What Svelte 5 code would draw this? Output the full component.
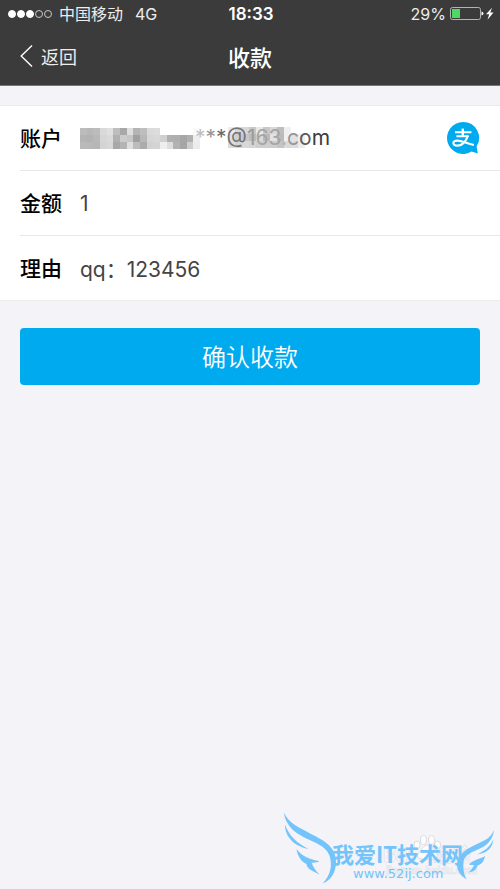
<script>
  let amount = $state('1');
  let reason = $state('qq：123456');

  const signal = [true, true, true, false, false];

  // grey levels of the mosaic that hides the start of the account, row by row
  const mosaic = [
    [188, 184, 188, 218, 224, 190, 168, 222, 180, 190, 218, 220, 255, 255, 255, 255, 255, 250],
    [180, 178, 184, 214, 218, 176, 204, 198, 160, 184, 214, 216, 208, 176, 174, 166, 176, 238],
    [186, 184, 182, 212, 216, 168, 180, 222, 188, 172, 210, 212, 238, 222, 178, 166, 206, 236]
  ];

  // second mosaic, over the domain
  const veil = [
    [236, 214, 216, 200, 232, 200, 216, 190, 240, 255, 255],
    [226, 208, 200, 188, 218, 186, 226, 186, 240, 226, 238],
    [220, 212, 216, 212, 206, 206, 206, 196, 218, 220, 236]
  ];

  const tail = [
    ['*', 190], ['*', 150], ['*', 105], ['@', 115], ['1', 155], ['6', 165],
    ['3', 165], ['.', 180], ['c', 150], ['o', 90], ['m', 60]
  ];

  const grey = (v) => `rgb(${v}, ${v}, ${v})`;
</script>

<div class="page">
  <header>
    <div class="status">
      <div class="carrier">
        <span class="signal">
          {#each signal as on}
            <i class:on></i>
          {/each}
        </span>
        <span>中国移动</span>
        <span class="network">4G</span>
      </div>
      <time>18:33</time>
      <div class="power">
        <span>29%</span>
        <svg width="44" height="14" viewBox="0 0 44 14" aria-hidden="true">
          <rect x="0.5" y="0.5" width="30" height="12" rx="2" fill="none" stroke="#b4b4b4" />
          <rect x="2" y="2" width="8" height="9" fill="#4cd964" />
          <path d="M31.5 4.5q2 .4 2 2t-2 2z" fill="#fff" />
          <path d="M42 .8 36 7.3h3.200L37.500 12.800 43.500 5.600h-3.200z" fill="#fff" />
        </svg>
      </div>
    </div>
    <nav>
      <a href="#back">
        <svg width="13" height="24" viewBox="0 0 13 24" aria-hidden="true">
          <path d="M12 1.5 1.2 12 12 22.5" fill="none" stroke="#fff" stroke-width="1.4" />
        </svg>
        返回
      </a>
      <h1>收款</h1>
    </nav>
  </header>

  <form onsubmit={(e) => e.preventDefault()}>
    <div class="fields">
      <div class="row">
        <span class="label">账户</span>
        <div class="account">
          <svg class="mosaic" width="120" height="21" viewBox="0 0 18 3" preserveAspectRatio="none" shape-rendering="crispEdges" aria-hidden="true">
            {#each mosaic as line, y}
              {#each line as v, x}
                <rect {x} {y} width="1" height="1" fill={grey(v)} />
              {/each}
            {/each}
          </svg>
          <span class="tail">
            <svg class="veil" width="77" height="21" viewBox="0 0 11 3" preserveAspectRatio="none" shape-rendering="crispEdges" aria-hidden="true">
              {#each veil as line, y}
                {#each line as v, x}
                  <rect {x} {y} width="1" height="1" fill={grey(v)} />
                {/each}
              {/each}
            </svg>
            <span class="chars">{#each tail as [ch, v]}<span style:color={grey(v)}>{ch}</span>{/each}</span>
          </span>
        </div>
        <svg class="alipay" width="33" height="33" viewBox="0 0 33 33" role="img" aria-label="支付宝">
          <path d="M16 0a16 16 0 1 0 8.6 29.5l6.2 2-1.2-6.9A16 16 0 0 0 16 0z" fill="#00aaef" />
          <g fill="none" stroke="#fff">
            <path d="M8 10.3h16.4M9.4 14.3h12.2" stroke-width="1.9" />
            <path d="M15.8 6.6v7.6" stroke-width="2.4" />
            <path d="M20.9 13.8c-1.4 4.6-5.2 9.8-10.6 9.8-5.4 0-5.2-5 .2-5 4.8 0 9.4 3.2 16.4 4.4" stroke-width="2.1" />
          </g>
        </svg>
      </div>
      <div class="row">
        <label for="amount">金额</label>
        <input id="amount" type="text" bind:value={amount} />
      </div>
      <div class="row">
        <label for="reason">理由</label>
        <input id="reason" type="text" bind:value={reason} />
      </div>
    </div>
    <button type="submit">确认收款</button>
  </form>

  <svg class="watermark" width="220" height="80" viewBox="0 0 220 80">
    <g class="baidu">
      <text x="103" y="53" font-size="20">Bai</text>
      <text x="153" y="53" font-size="19">经验</text>
      <text x="106" y="65" font-size="10">jingyan.baidu.com</text>
      <g class="paw">
        <ellipse cx="137" cy="36" rx="3" ry="4" />
        <ellipse cx="143.5" cy="31" rx="3" ry="4.5" />
        <ellipse cx="151.5" cy="31" rx="3" ry="4.5" />
        <ellipse cx="157.5" cy="36" rx="3" ry="4" />
        <path d="M147.5 36c4 0 5 4 8 7s2 7-2 7h-12c-4 0-5-4-2-7s4-7 8-7z" />
      </g>
    </g>
    <g class="wings">
      <path d="M4 3.7C9 15 19 18 31 25 45 32 56 38 56 53c0 11-6 19-13.3 21.3C50 67 53 57 49.5 46.5 45 35 31 33 20 26 11 21 5 13 4 3.7z" />
      <path d="M5 15.5C9 27 17 34 28.5 40 17 38 5 30 5 15.5z" />
      <path d="M16.5 40c6 8 13 10 23 12.3-3 1.4-6 1.6-8 1.2 2 5 4 8 8 12C31 61 27 60 26.500 55c-5-2-9-8-10-15z" />
      <path d="M214 21c-1 8-5 14-13 18-9 4-17 7-17.5 14-.5 6 0 12 3.2 17.3-6-3-9.7-8.800-9.7-14.800 0-8 7-14 14-17.5C202 32 210 31 214 21z" />
      <path d="M213.5 30c-1 9-6 14-16.5 15.5 7-3.500 13-7 16.5-15.5z" />
      <path d="M205 47c-4 3-11 3-16 8.5 2 .8 3 .6 5 .6-1 3-3 5-5.5 7.4 7-1 8-4 9-7 4-1 6.5-4 7.5-9.5z" />
      <text class="name" x="52" y="54">我爱IT技术网</text>
      <text class="site" x="73" y="69">www.52ij.com</text>
    </g>
  </svg>
</div>

<style>
  :global(body) {
    margin: 0;
    background: #f3f3f8;
  }

  .page {
    position: relative;
    min-height: 100vh;
    background: #f3f3f8;
    color: #3c3c3c;
    font-family: Inter, "Noto Sans CJK SC", sans-serif;
  }

  header {
    background: #3b3b3b;
    border-bottom: 1px solid #77757a;
    color: #fff;
  }

  .status {
    display: grid;
    grid-template-columns: 1fr auto 1fr;
    align-items: center;
    height: 28px;
    padding: 0 6px 0 8px;
    font-size: 16px;
    line-height: 28px;
  }

  .carrier,
  .power {
    display: flex;
    align-items: center;
    color: #ededed;
  }

  .power {
    justify-content: flex-end;
    gap: 4px;
  }

  .signal {
    display: flex;
    gap: 1px;
    margin-right: 7px;
  }

  .signal i {
    box-sizing: border-box;
    width: 8px;
    height: 8px;
    border: 1px solid #c8c8c8;
    border-radius: 50%;
  }

  .signal i.on {
    background: #fff;
    border-color: #fff;
  }

  .network {
    margin-left: 12px;
  }

  time {
    font-size: 17px;
    font-weight: 600;
  }

  nav {
    display: grid;
    grid-template-columns: 1fr auto 1fr;
    align-items: center;
    height: 55px;
    padding: 0 20px 2px;
  }

  nav a {
    display: flex;
    align-items: center;
    gap: 8px;
    color: #ededed;
    font-size: 18px;
    text-decoration: none;
  }

  h1 {
    margin: 0;
    font-size: 22px;
    font-weight: 500;
  }

  .fields {
    margin-top: 19px;
    padding-left: 20px;
    background: #fff;
    border-top: 1px solid #e9e9ec;
    border-bottom: 1px solid #ececec;
  }

  .row {
    display: flex;
    align-items: center;
    height: 64px;
    padding-right: 20px;
    font-size: 21px;
  }

  .row + .row {
    border-top: 1px solid #e8e8e8;
  }

  .label,
  label {
    flex: none;
    width: 60px;
    padding-bottom: 2px;
    color: #000;
    font-weight: 500;
  }

  .row input {
    flex: 1;
    min-width: 0;
    padding: 0;
    border: 0;
    outline: 0;
    background: none;
    color: #444;
    font: inherit;
  }

  .account {
    display: flex;
    flex: 1;
    align-items: center;
  }

  .tail {
    position: relative;
    margin-left: -5px;
    line-height: 28px;
  }

  .veil {
    position: absolute;
    top: 3px;
    left: 33px;
  }

  .chars {
    position: relative;
  }

  .alipay {
    flex: none;
  }

  button {
    display: block;
    width: calc(100% - 40px);
    height: 57px;
    margin: 27px 20px 0;
    padding: 0 0 2px;
    border: 0;
    border-radius: 4px;
    background: #00aaef;
    color: #fff;
    font: 350 24px "Noto Sans CJK SC", sans-serif;
  }

  .watermark {
    position: absolute;
    right: 0;
    bottom: 0;
  }

  .baidu {
    fill: #f6f6fa;
    stroke: #e2e2e7;
    stroke-width: 0.6;
    font-weight: 700;
  }

  .paw {
    fill: #fdfdfe;
    stroke: #dcdce0;
    stroke-width: 1;
  }

  .wings {
    fill: #72c4fa;
  }

  .name {
    font: 700 22px "Noto Sans CJK SC", sans-serif;
  }

  .site {
    font: 13px "DejaVu Sans", sans-serif;
  }
</style>
